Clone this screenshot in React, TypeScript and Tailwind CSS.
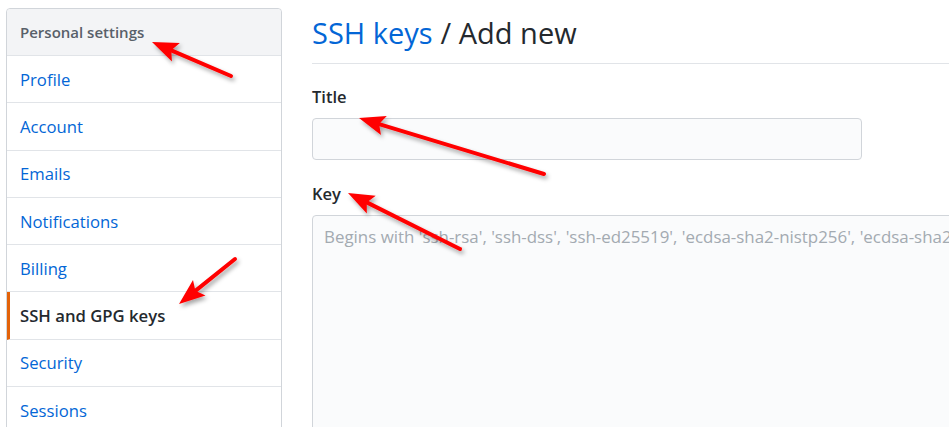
import React from "react";

const menu = ["Profile", "Account", "Emails", "Notifications", "Billing", "SSH and GPG keys", "Security", "Sessions"];

type Arrow = { from: [number, number]; to: [number, number] };

const arrows: Arrow[] = [
  { from: [231, 76], to: [152, 42] },
  { from: [235, 259], to: [179, 304] },
  { from: [544, 174], to: [359, 118] },
  { from: [460, 249], to: [348, 193] },
];

function RedArrow({ from, to }: Arrow) {
  const dx = to[0] - from[0];
  const dy = to[1] - from[1];
  const len = Math.hypot(dx, dy);
  const ux = dx / len;
  const uy = dy / len;
  const L = 26;
  const W = 10;
  const bx = to[0] - ux * L;
  const by = to[1] - uy * L;
  const nx = -uy;
  const ny = ux;
  const notchX = to[0] - ux * (L - 5);
  const notchY = to[1] - uy * (L - 5);
  const pts = [
    `${to[0]},${to[1]}`,
    `${bx + nx * W},${by + ny * W}`,
    `${notchX},${notchY}`,
    `${bx - nx * W},${by - ny * W}`,
  ].join(" ");
  return (
    <g>
      <line x1={from[0]} y1={from[1]} x2={notchX} y2={notchY} stroke="#ff0000" strokeWidth={4} strokeLinecap="round" />
      <polygon points={pts} fill="#ff0000" />
    </g>
  );
}

export default function App() {
  return (
    <div className="relative w-[949px] h-[427px] overflow-hidden bg-white font-['Open_Sans',sans-serif] text-[#24292e]">
      <div className="flex pt-2 pl-[6px]">
        {/* sidebar */}
        <nav className="w-[276px] shrink-0 rounded-t-[4px] border border-[#d1d5da]">
          <div className="flex h-[47px] items-center border-b border-[#e1e4e8] bg-[#f3f4f6] px-[13px] text-[15px] font-semibold text-[#586069] rounded-t-[4px]">
            Personal settings
          </div>
          {menu.map((m) => {
            const active = m === "SSH and GPG keys";
            return (
              <div
                key={m}
                className={
                  active
                    ? "flex h-[47.3px] items-center border-b border-[#e1e4e8] border-l-[3px] border-l-[#e36209] pl-[10px] text-[16.7px] font-semibold text-[#24292e]"
                    : "flex h-[47.3px] items-center border-b border-[#e1e4e8] px-[13px] text-[16.7px] text-[#0366d6]"
                }
              >
                {m}
              </div>
            );
          })}
        </nav>

        {/* main */}
        <main className="ml-[30px] w-[700px] shrink-0">
          <div className="flex h-[56px] items-center border-b border-[#e1e4e8] pb-[6px] text-[29px] leading-none">
            <span className="text-[#0366d6]">SSH keys</span>
            <span className="ml-[8px]">/ Add new</span>
          </div>
          <div className="mt-[20px] text-[16.5px] font-semibold leading-[26px]">Title</div>
          <div className="mt-[8px] h-[42px] w-[550px] rounded-[4px] border border-[#d1d5da] bg-[#fafbfc]" />
          <div className="mt-[21px] text-[16.5px] font-semibold leading-[26px]">Key</div>
          <div className="mt-[8px] h-[260px] w-[700px] overflow-hidden rounded-[4px] border border-[#d1d5da] bg-[#fafbfc] px-[11px] pt-[8px] text-[16.9px] whitespace-nowrap text-[#a3aab1]">
            Begins with 'ssh-rsa', 'ssh-dss', 'ssh-ed25519', 'ecdsa-sha2-nistp256', 'ecdsa-sha2-
          </div>
        </main>
      </div>

      {/* annotation arrows */}
      <svg className="pointer-events-none absolute inset-0" width={949} height={427}>
        <defs>
          <filter id="sh" x="-20%" y="-20%" width="140%" height="140%">
            <feDropShadow dx="2" dy="3" stdDeviation="2" floodColor="#000" floodOpacity="0.35" />
          </filter>
        </defs>
        <g filter="url(#sh)">
          {arrows.map((a, i) => (
            <RedArrow key={i} {...a} />
          ))}
        </g>
      </svg>
    </div>
  );
}
